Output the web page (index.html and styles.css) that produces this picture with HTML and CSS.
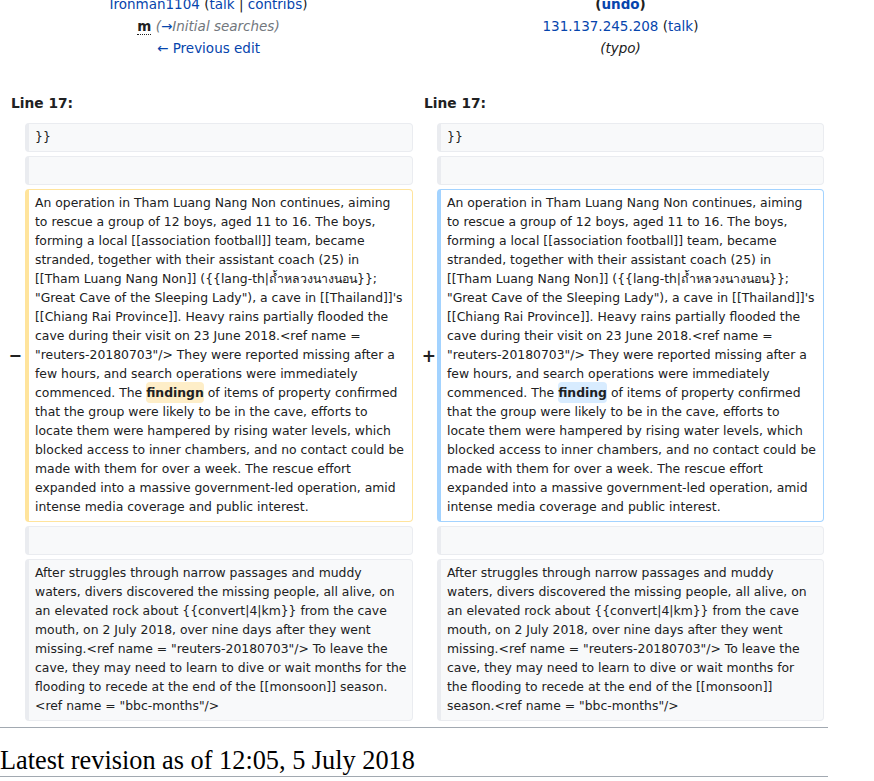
FILE: index.html
```html
<!DOCTYPE html>
<html lang="en">
<head>
<meta charset="utf-8">
<title>Diff</title>
<link rel="stylesheet" href="styles.css">
</head>
<body>
<div class="page">
  <div class="diff">
    <div class="otitle">
      <div class="hline"><a href="#">Ironman1104</a> <span class="tool">(<a href="#">talk</a> <span class="sep">|</span> <a href="#">contribs</a>)</span></div>
      <div class="hline"><abbr class="minor">m</abbr> <span class="comment">(<a href="#">→</a>Initial searches)</span></div>
      <div class="hline"><a href="#">← Previous edit</a></div>
    </div>
    <div class="ntitle">
      <div class="hline"><b class="undo">(<a href="#">undo</a>)</b></div>
      <div class="hline"><a href="#">131.137.245.208</a> <span class="tool">(<a href="#">talk</a>)</span></div>
      <div class="hline"><span class="comment2">(typo)</span></div>
    </div>

    <div class="lineno">Line 17:</div>
    <div class="lineno">Line 17:</div>

    <div class="marker"></div>
    <div class="cell ctx">}}</div>
    <div class="marker"></div>
    <div class="cell ctx">}}</div>

    <div class="marker"></div>
    <div class="cell ctx"><br></div>
    <div class="marker"></div>
    <div class="cell ctx"><br></div>

    <div class="marker"><span class="minus">−</span></div>
    <div class="cell del">An operation in Tham Luang Nang Non continues, aiming to rescue a group of 12 boys, aged 11 to 16. The boys, forming a local [[association football]] team, became stranded, together with their assistant coach (25) in [[Tham Luang Nang Non]] ({{lang-th|ถ้ำหลวงนางนอน}}; "Great Cave of the Sleeping Lady"), a cave in [[Thailand]]'s [[Chiang Rai Province]]. Heavy rains partially flooded the cave during their visit on 23 June 2018.&lt;ref name = "reuters-20180703"/&gt; They were reported missing after a few hours, and search operations were immediately commenced. The <del class="chg">findingn</del> of items of property confirmed that the group were likely to be in the cave, efforts to locate them were hampered by rising water levels, which blocked access to inner chambers, and no contact could be made with them for over a week. The rescue effort expanded into a massive government-led operation, amid intense media coverage and public interest.</div>
    <div class="marker"><span class="plus">+</span></div>
    <div class="cell add">An operation in Tham Luang Nang Non continues, aiming to rescue a group of 12 boys, aged 11 to 16. The boys, forming a local [[association football]] team, became stranded, together with their assistant coach (25) in [[Tham Luang Nang Non]] ({{lang-th|ถ้ำหลวงนางนอน}}; "Great Cave of the Sleeping Lady"), a cave in [[Thailand]]'s [[Chiang Rai Province]]. Heavy rains partially flooded the cave during their visit on 23 June 2018.&lt;ref name = "reuters-20180703"/&gt; They were reported missing after a few hours, and search operations were immediately commenced. The <ins class="chg">finding</ins> of items of property confirmed that the group were likely to be in the cave, efforts to locate them were hampered by rising water levels, which blocked access to inner chambers, and no contact could be made with them for over a week. The rescue effort expanded into a massive government-led operation, amid intense media coverage and public interest.</div>

    <div class="marker"></div>
    <div class="cell ctx"><br></div>
    <div class="marker"></div>
    <div class="cell ctx"><br></div>

    <div class="marker"></div>
    <div class="cell ctx wide">After struggles through narrow passages and muddy waters, divers discovered the missing people, all alive, on an elevated rock about {{convert|4|km}} from the cave mouth, on 2 July 2018, over nine days after they went missing.&lt;ref name = "reuters-20180703"/&gt; To leave the cave, they may need to learn to dive or wait months for the flooding to recede at the end of the [[monsoon]] season.&lt;ref name = "bbc-months"/&gt;</div>
    <div class="marker"></div>
    <div class="cell ctx">After struggles through narrow passages and muddy waters, divers discovered the missing people, all alive, on an elevated rock about {{convert|4|km}} from the cave mouth, on 2 July 2018, over nine days after they went missing.&lt;ref name = "reuters-20180703"/&gt; To leave the cave, they may need to learn to dive or wait months for the flooding to recede at the end of the [[monsoon]] season.&lt;ref name = "bbc-months"/&gt;</div>
  </div>
  <hr class="diff-hr">
  <h2 class="rev-heading">Latest revision as of 12:05, 5 July 2018</h2>
</div>
</body>
</html>
```
FILE: styles.css
```css
* { box-sizing: border-box; }
html, body { margin: 0; padding: 0; background: #fff; }
body {
  font-family: "DejaVu Sans", sans-serif;
  color: #202122;
}
.page {
  width: 828px;
  margin-top: -7px;
}
a { color: #0645ad; text-decoration: none; }

.diff {
  display: grid;
  grid-template-columns: 17px 388px 16px 387px;
  gap: 4px;
  padding: 0 4px 4px;
}
.otitle, .ntitle {
  grid-column: span 2;
  text-align: center;
  font-size: 13.5px;
  line-height: 22px;
  padding-bottom: 27px;
}
.tool { color: #202122; }
.sep { color: #202122; }
.minor {
  font-weight: bold;
  text-decoration: none;
  border-bottom: 1px dotted #202122;
  cursor: help;
}
.comment { font-style: italic; color: #72777d; }
.comment2 { font-style: italic; color: #202122; }
.undo { font-weight: bold; }

.lineno {
  grid-column: span 2;
  font-weight: bold;
  font-size: 13.75px;
  line-height: 19px;
  padding: 4px 7px 6px;
}
.marker {
  display: flex;
  align-items: center;
  justify-content: flex-end;
  font-weight: bold;
  font-size: 16px;
}
.minus { margin-right: -1px; }
.plus { margin-right: -3px; font-size: 17px; }
.cell {
  font-size: 12.4px;
  line-height: 19px;
  padding: 3px 6px 5px;
  border: 1px solid #eaecf0;
  border-left-width: 4px;
  border-radius: 4px;
  overflow-wrap: break-word;
  min-width: 0;
}
.cell.wide { padding-right: 4px; }
.ctx { background: #f8f9fa; border-color: #eaecf0; }
.del { background: #fff; border-color: #ffe49c; }
.add { background: #fff; border-color: #a3d3ff; }
.chg {
  font-weight: bold;
  text-decoration: none;
  border-radius: 4px;
  padding: 3px 0;
}
.del .chg { background: #feeec8; }
.add .chg { background: #d8ecff; }

.diff-hr {
  margin: 2px 0 0;
  border: 0;
  height: 1px;
  background: #a2a9b1;
}
.rev-heading {
  font-family: "Liberation Serif", serif;
  font-weight: normal;
  font-size: 26.3px;
  line-height: 30px;
  margin: 18px 0 0;
  border-bottom: 1px solid #a2a9b1;
  color: #000;
}
```
